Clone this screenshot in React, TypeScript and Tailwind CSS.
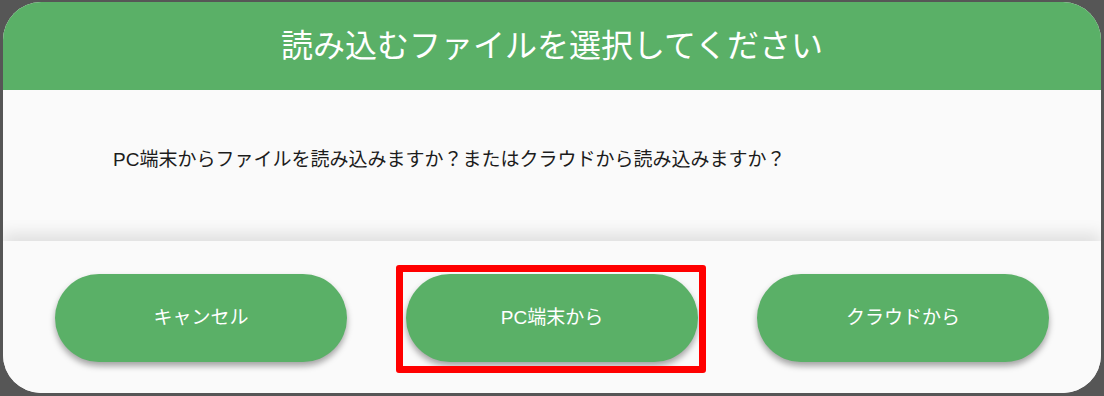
const buttons = ["キャンセル", "PC端末から", "クラウドから"];

export default function App() {
  return (
    <div className="h-[396px] w-[1104px] overflow-hidden bg-[#565656] pl-[3px] pt-[2px] font-['Liberation_Sans','Noto_Sans_CJK_JP',sans-serif] antialiased">
      <div className="flex h-[391px] w-[1098px] flex-col overflow-hidden rounded-[38px] bg-[#fafafa]">
        <div className="flex h-[88px] shrink-0 items-center justify-center bg-[#5ab067]">
          <h1 className="text-[32px] leading-none text-white">
            読み込むファイルを選択してください
          </h1>
        </div>

        <div className="h-[151px] shrink-0 bg-[#fafafa] pl-[110px] pt-[59px]">
          <p className="text-[19px] leading-[22px] text-[#1c1c1c]">
            PC端末からファイルを読み込みますか？またはクラウドから読み込みますか？
          </p>
        </div>

        <div className="relative z-10 flex flex-1 items-start justify-between bg-[#fafafa] px-[52px] pt-[33px] shadow-[0_-8px_14px_rgba(0,0,0,0.10)]">
          {buttons.map((label, i) => (
            <div key={label} className="relative">
              <button className="flex h-[88px] w-[292px] items-center justify-center rounded-full bg-[#5ab067] text-[19px] text-white shadow-[0_4px_6px_rgba(0,0,0,0.35)]">
                {label}
              </button>
              {i === 1 && (
                <div className="absolute -left-[10px] -top-[9px] h-[108px] w-[310px] rounded-[3px] border-[7px] border-[#ff0000]" />
              )}
            </div>
          ))}
        </div>
      </div>
    </div>
  );
}
